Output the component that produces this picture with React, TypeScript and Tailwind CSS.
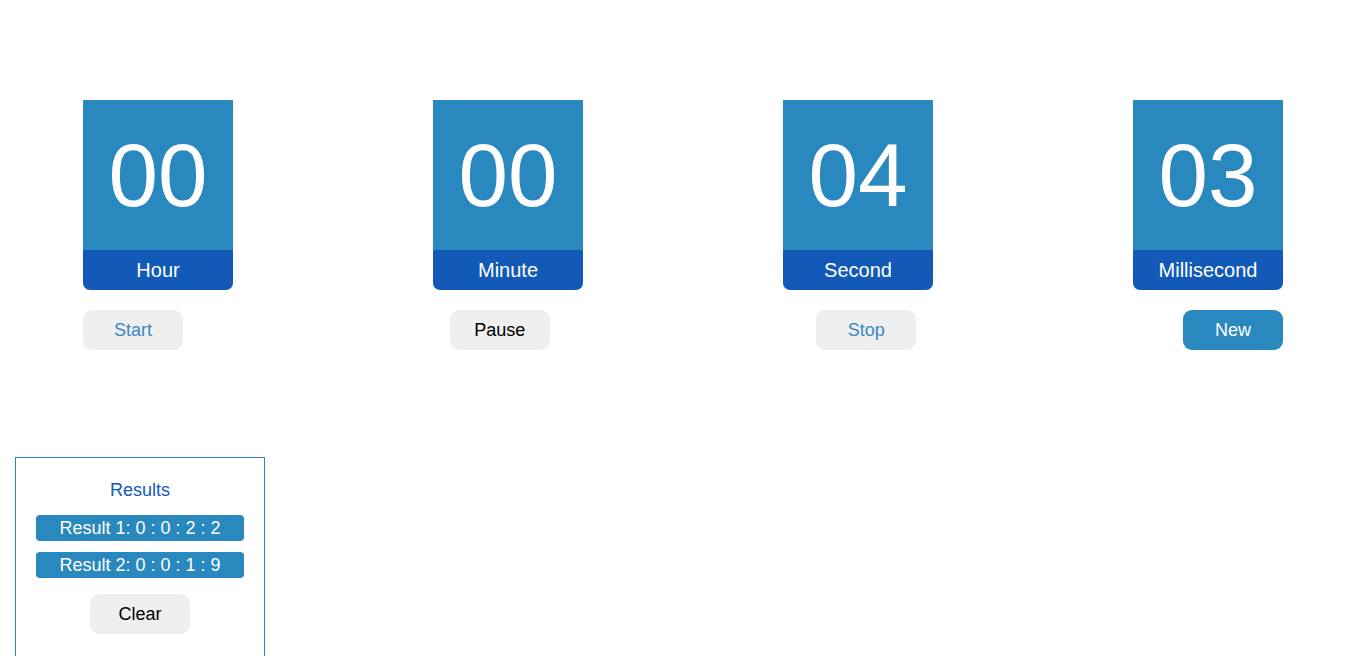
import React from 'react'

// --- 计时单元 ---
const units = [
  { value: '00', label: 'Hour' },
  { value: '00', label: 'Minute' },
  { value: '04', label: 'Second' },
  { value: '03', label: 'Millisecond' },
]

const results = ['Result 1: 0 : 0 : 2 : 2', 'Result 2: 0 : 0 : 1 : 9']

function TimeCard({ value, label }: { value: string; label: string }) {
  return (
    <div className="w-[150px] overflow-hidden rounded-b-[7px]">
      <div className="flex h-[150px] items-center justify-center bg-[#2988be] text-[89px] leading-none text-white">
        {value}
      </div>
      <div className="flex h-10 items-center justify-center bg-[#1259b8] text-[20px] text-white">
        {label}
      </div>
    </div>
  )
}

export default function App() {
  return (
    <div
      className="min-h-screen bg-white pb-10"
      style={{ fontFamily: '"Liberation Sans", Arial, sans-serif' }}
    >
      <div className="ml-[83px] w-[1200px] pt-[100px]">
        {/* 卡片 */}
        <div className="flex justify-between">
          {units.map((u) => (
            <TimeCard key={u.label} value={u.value} label={u.label} />
          ))}
        </div>

        {/* 按钮 */}
        <div className="mt-5 flex justify-between">
          <button className="h-10 w-[100px] rounded-[9px] bg-[#efefef] text-[18px] text-[#3a88c2]">
            Start
          </button>
          <button className="h-10 w-[100px] rounded-[9px] bg-[#efefef] text-[18px] text-black">
            Pause
          </button>
          <button className="h-10 w-[100px] rounded-[9px] bg-[#efefef] text-[18px] text-[#3a88c2]">
            Stop
          </button>
          <button className="h-10 w-[100px] rounded-[9px] bg-[#2988be] text-[18px] text-white">
            New
          </button>
        </div>
      </div>

      {/* 结果 */}
      <div className="ml-[15px] mt-[107px] w-[250px] border border-[#2988be] px-5 pb-10 pt-5">
        <div className="h-6 text-center text-[18px] leading-6 text-[#1259b8]">Results</div>
        <div className="mt-[13px] flex flex-col gap-[11px]">
          {results.map((r) => (
            <div
              key={r}
              className="h-[26px] rounded bg-[#2988be] text-center text-[18px] leading-[26px] text-white"
            >
              {r}
            </div>
          ))}
        </div>
        <div className="mt-4 flex justify-center">
          <button className="h-10 w-[100px] rounded-[9px] bg-[#efefef] text-[18px] text-black">
            Clear
          </button>
        </div>
      </div>
    </div>
  )
}
